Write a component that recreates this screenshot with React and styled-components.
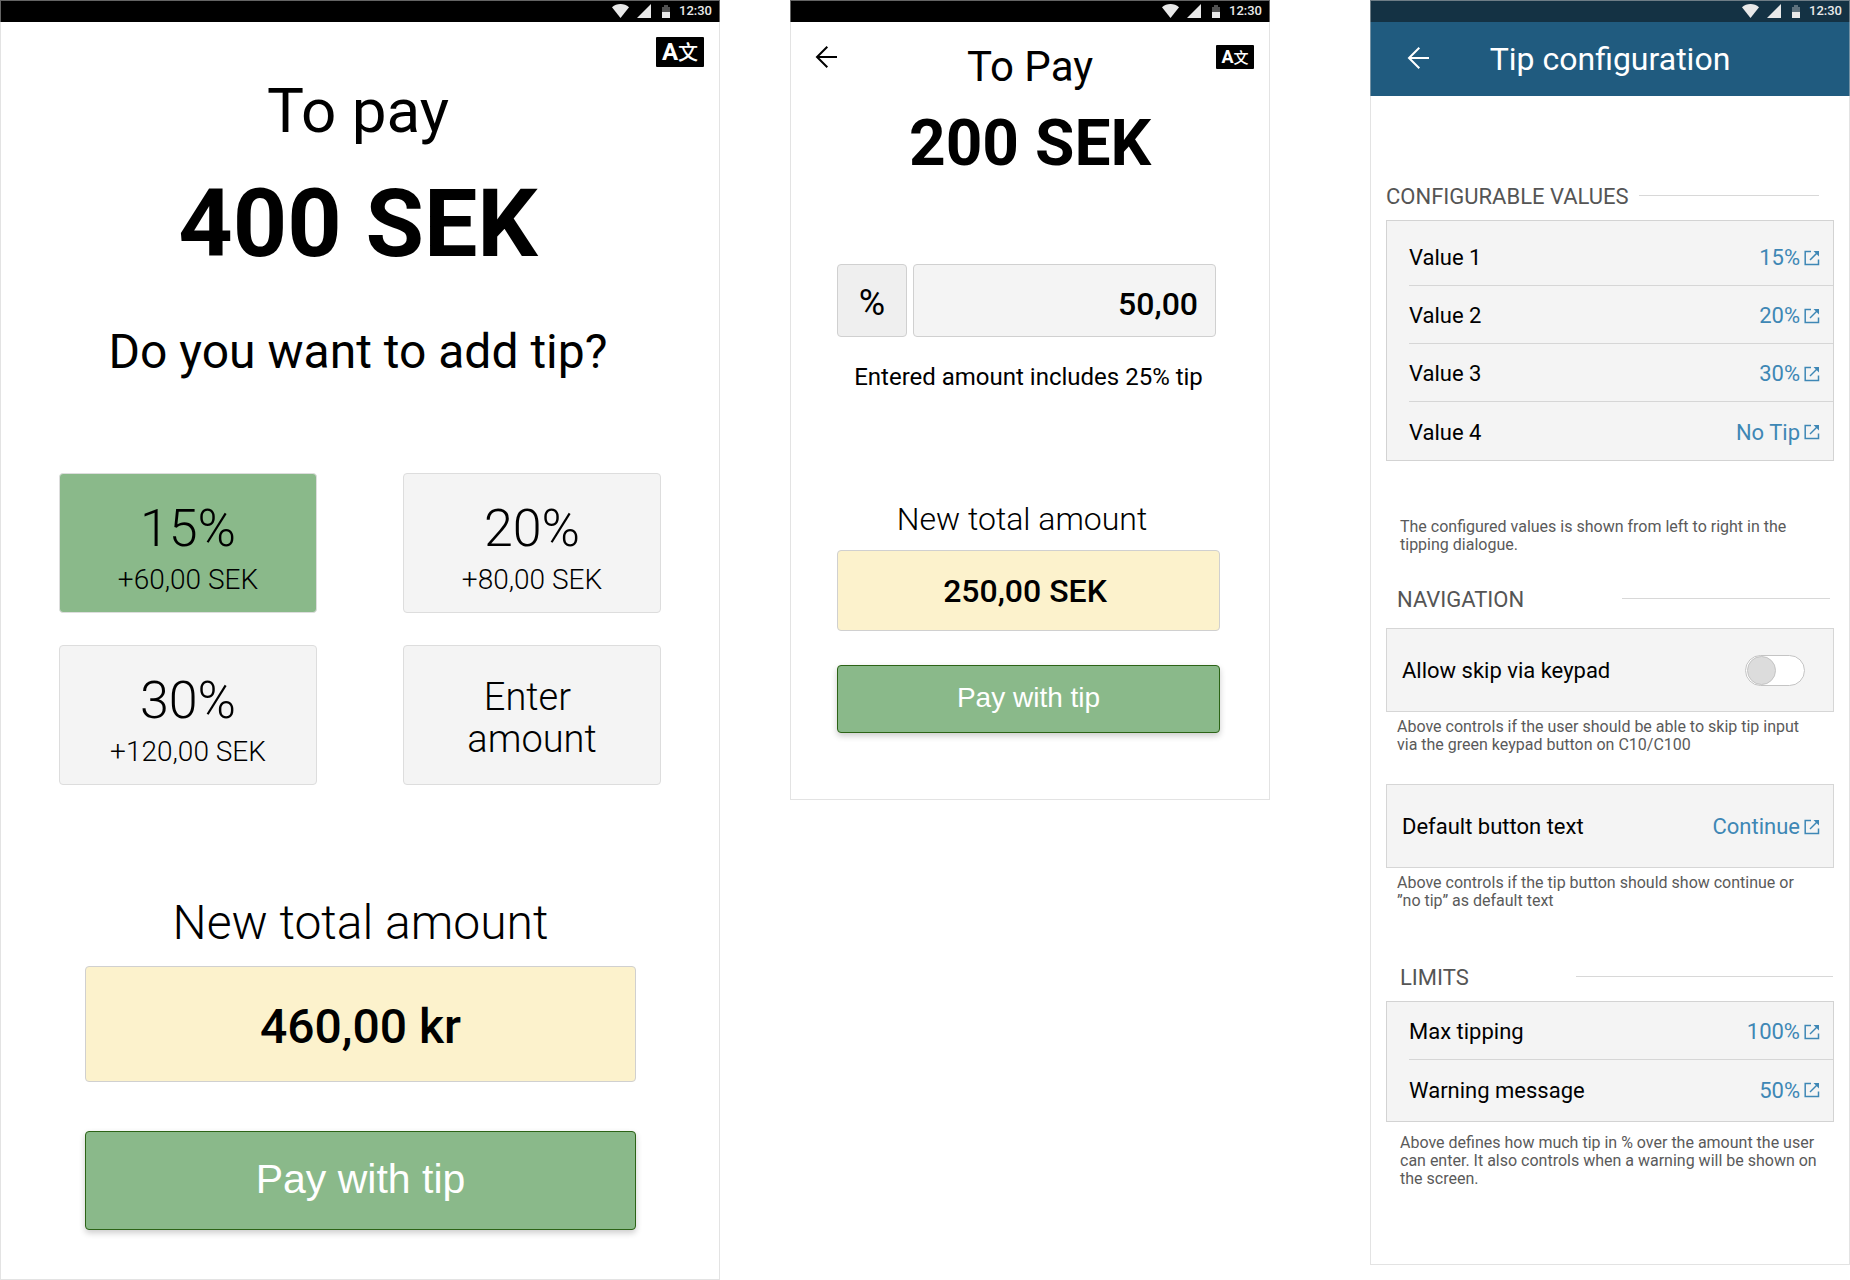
// App.jsx
// Tipping screens: amount choice, free amount, configuration

import styled, { createGlobalStyle } from "styled-components";

const GlobalStyle = createGlobalStyle`
    * { box-sizing: border-box; }

    body {
        margin: 0;
        background: #fff;
        color: #000;
        font-family: Roboto, "Liberation Sans", sans-serif;
    }

    button, input {
        font-family: inherit;
        color: inherit;
        padding: 0;
        margin: 0;
    }

    h1, h2, p, ul { margin: 0; padding: 0; }
    ul { list-style: none; }
`;

const Board = styled.main`
    display: flex;
    align-items: flex-start;
    gap: 70px;
`;

const Screen = styled.section`
    position: relative;
    flex: ${({ $grow }) => $grow} 1 0;
    min-width: 0;
    display: flex;
    flex-direction: column;
    padding-bottom: ${({ $bottom }) => $bottom}px;
    margin-left: ${({ $apart }) => ($apart ? 30 : 0)}px;

    /* thin frame on top of the bars */
    &::after {
        content: "";
        position: absolute;
        inset: 0;
        border: 1px solid rgba(200, 200, 200, 0.5);
        pointer-events: none;
    }
`;

const Status = styled.div`
    display: flex;
    justify-content: flex-end;
    align-items: center;
    height: 22px;
    padding-right: 8px;
    background: ${({ $blue }) => ($blue ? "#143244" : "#000")};
    color: #e9e9e9;
    font-size: 13px;
    line-height: 16px;
    font-weight: 500;

    & svg { margin-right: 8px; }
`;

const Badge = styled.button`
    display: flex;
    justify-content: center;
    align-items: center;
    width: ${({ $small }) => ($small ? 38 : 48)}px;
    height: ${({ $small }) => ($small ? 24 : 30)}px;
    border: 0;
    border-radius: 1px;
    background: #000;
    color: #fff;
    font-size: ${({ $small }) => ($small ? 18 : 24)}px;
    line-height: 24px;
    font-weight: 700;

    & span {
        font-family: "Noto Sans CJK SC", sans-serif;
        font-size: ${({ $small }) => ($small ? 15 : 20)}px;
        font-weight: 500;
    }
`;

const LanguageRow = styled.div`
    display: flex;
    justify-content: flex-end;
    padding: 15px 16px 0;
`;

const Intro = styled.div`
    padding-right: 4px;
`;

const PayTitle = styled.h1`
    margin-top: 8px;
    font-size: 62px;
    line-height: 72px;
    font-weight: 400;
    text-align: center;
`;

const Amount = styled.p`
    margin-top: ${({ $small }) => ($small ? 15 : 21)}px;
    font-size: ${({ $small }) => ($small ? 64 : 95)}px;
    line-height: ${({ $small }) => ($small ? 76 : 112)}px;
    font-weight: 700;
    text-align: center;
`;

const Question = styled.h2`
    margin-top: 44px;
    font-size: 48px;
    line-height: 56px;
    font-weight: 400;
    text-align: center;
`;

const Choices = styled.div`
    display: grid;
    grid-template-columns: 1fr 1fr;
    gap: 32px 86px;
    margin-top: 93px;
    padding: 0 59px;
`;

const Choice = styled.button`
    display: flex;
    flex-direction: column;
    justify-content: center;
    align-items: center;
    gap: 4px;
    height: 140px;
    padding-top: 10px;
    border: 1px solid #ddd;
    border-radius: 4px;
    background: ${({ $selected }) => ($selected ? "#8ab98a" : "#f4f4f4")};
    font-size: 28px;
    line-height: 34px;
    font-weight: 300;

    & strong {
        font-size: 52px;
        line-height: 60px;
        font-weight: 300;
    }
`;

const EnterText = styled.span`
    width: 140px;
    padding-bottom: 4px;
    font-size: 38px;
    line-height: 42px;
    white-space: break-spaces;
`;

const Form = styled.div`
    display: flex;
    flex-direction: column;
    padding: ${({ $small }) => ($small ? "0 50px 0 47px" : "0 84px 0 85px")};
`;

const TotalLabel = styled.h2`
    margin-top: ${({ $small }) => ($small ? 108 : 110)}px;
    padding-right: ${({ $small }) => ($small ? 13 : 0)}px;
    font-size: ${({ $small }) => ($small ? 32 : 48)}px;
    line-height: ${({ $small }) => ($small ? 40 : 56)}px;
    font-weight: 300;
    text-align: center;
`;

const Total = styled.output`
    display: flex;
    justify-content: center;
    align-items: center;
    height: ${({ $small }) => ($small ? 81 : 116)}px;
    margin-top: ${({ $small }) => ($small ? 11 : 15)}px;
    padding: ${({ $small }) => ($small ? "0 7px 0 0" : "5px 0 0")};
    border: 1px solid #d0d0d0;
    border-radius: 4px;
    background: #fcf2cc;
    font-size: ${({ $small }) => ($small ? 32 : 48)}px;
    font-weight: 500;
`;

const PayButton = styled.button`
    height: ${({ $small }) => ($small ? 68 : 99)}px;
    margin-top: ${({ $small }) => ($small ? 34 : 49)}px;
    padding-bottom: 2px;
    border: 1px solid #2c6316;
    border-radius: 4px;
    background: #8ab98a;
    box-shadow: 0 3px 6px rgba(0, 0, 0, 0.2);
    color: #fff;
    font-family: "Liberation Sans", Arial, sans-serif;
    font-size: ${({ $small }) => ($small ? 28 : 41)}px;
`;

const Header = styled.header`
    display: grid;
    grid-template-columns: 1fr auto 1fr;
    align-items: start;
    padding: 21px 16px 0;

    & h1 {
        font-size: 42px;
        line-height: 48px;
        font-weight: 400;
    }
`;

const HeaderSide = styled.div`
    display: flex;
    align-items: center;
    justify-content: ${({ $end }) => ($end ? "flex-end" : "flex-start")};
    height: ${({ $tall }) => ($tall ? 36 : 28)}px;
    padding-left: 8px;
`;

const BackButton = styled.button`
    display: flex;
    border: 0;
    background: none;
`;

const InputRow = styled.div`
    display: flex;
    gap: 6px;
    margin: 82px 4px 0 0;
`;

const UnitButton = styled.button`
    width: 70px;
    height: 73px;
    padding-top: 4px;
    border: 1px solid #d0d0d0;
    border-radius: 4px;
    background: #efefef;
    font-size: 36px;
`;

const AmountInput = styled.input`
    flex: 1;
    min-width: 0;
    height: 73px;
    padding: 6px 17px 0;
    border: 1px solid #d0d0d0;
    border-radius: 4px;
    background: #f4f4f4;
    font-size: 32px;
    font-weight: 500;
    text-align: right;
`;

const Hint = styled.p`
    margin-top: 26px;
    font-size: 24px;
    line-height: 28px;
    text-align: center;
`;

const AppBar = styled.header`
    display: grid;
    grid-template-columns: 1fr auto 1fr;
    align-items: start;
    height: 74px;
    padding: 18px 28px 0;
    background: #205b7f;
    color: #fff;

    & h1 {
        font-size: 32px;
        line-height: 38px;
        font-weight: 400;
    }
`;

const Settings = styled.div`
    display: flex;
    flex-direction: column;
    padding: 0 16px;
`;

const SectionTitle = styled.h2`
    display: flex;
    justify-content: space-between;
    align-items: center;
    margin-top: ${({ $top }) => $top}px;
    margin-bottom: ${({ $gap }) => $gap}px;
    padding: ${({ $inset }) => $inset};
    color: #555;
    font-size: 22px;
    line-height: 26px;
    font-weight: 400;
    white-space: nowrap;

    &::after {
        content: "";
        width: ${({ $rule }) => $rule}px;
        height: 1px;
        margin-bottom: 3px;
        background: #d8d8d8;
    }
`;

const List = styled.ul`
    padding: ${({ $pad }) => $pad};
    border: 1px solid #d3d3d3;
    background: #f4f4f4;
`;

const Row = styled.li`
    display: flex;
    justify-content: space-between;
    align-items: center;
    height: 58px;
    padding: 2px 13px 0 0;
    border-bottom: 1px solid #d6d6d6;
    font-size: 22px;

    &:last-child { border-bottom: 0; }
`;

const Panel = styled.div`
    display: flex;
    justify-content: space-between;
    align-items: center;
    height: 84px;
    margin-top: ${({ $top }) => $top}px;
    padding: 1px ${({ $right }) => $right}px 0 15px;
    border: 1px solid #d6d6d6;
    background: #f4f4f4;
    font-size: 22px;
`;

const ValueLink = styled.a`
    display: flex;
    align-items: center;
    gap: 4px;
    color: #3e87b5;
    text-decoration: none;
`;

const Note = styled.p`
    margin-top: ${({ $top }) => $top}px;
    padding: 0 14px 0 ${({ $left }) => $left}px;
    color: #5a5a5a;
    font-size: 16px;
    line-height: 18px;
`;

const Toggle = styled.input`
    appearance: none;
    display: flex;
    align-items: center;
    width: 60px;
    height: 31px;
    padding: 1px;
    border: 1px solid #c4c4c4;
    border-radius: 16px;
    background: #fff;

    &::before {
        content: "";
        width: 27px;
        height: 27px;
        border: 1px solid #c4c4c4;
        border-radius: 50%;
        background: #dcdcdc;
    }

    &:checked { justify-content: flex-end; }
`;

function StatusBar({ blue }) {
    return (
        <Status $blue={blue}>
            <svg width="60" height="16" viewBox="0 0 60 16" fill="currentColor">
                <path d="M1 4.2C3.400 2 6.300 1 9.500 1s6.100 1 8.500 3.200L9.500 15z" />
                <path d="M40 1v14H26z" />
                <path d="M51 4h2V2h4v2h2v5h-8z" opacity="0.35" />
                <path d="M51 9h8v6h-8z" />
            </svg>
            12:30
        </Status>
    )
}

function Language({ small }) {
    return (
        <Badge type="button" aria-label="Language" $small={small}>A<span>文</span></Badge>
    )
}

function Back() {
    return (
        <BackButton type="button" aria-label="Back">
            <svg width="24" height="24" viewBox="0 0 24 24" fill="none" stroke="currentColor" strokeWidth="2">
                <path d="M23 12H3M13.300 1.700L3 12l10.300 10.300" />
            </svg>
        </BackButton>
    )
}

function EditLink({ children }) {
    return (
        <ValueLink href="#">
            {children}
            <svg width="16" height="16" viewBox="0 0 16 16" fill="none" stroke="currentColor" strokeWidth="1.500">
                <path d="M7 1.500H1.200V14.500H14.500V9.500" />
                <path d="M6 10L13 3" />
                <path d="M9.500 1H15V6.500z" fill="currentColor" stroke="none" />
            </svg>
        </ValueLink>
    )
}

function TipChoice() {
    return (
        <Screen $grow={3} $bottom={50}>
            <StatusBar />
            <LanguageRow><Language /></LanguageRow>
            <Intro>
                <PayTitle>To pay</PayTitle>
                <Amount>400 SEK</Amount>
                <Question>Do you want to add tip?</Question>
            </Intro>
            <Choices>
                <Choice type="button" $selected><strong>15%</strong>+60,00 SEK</Choice>
                <Choice type="button"><strong>20%</strong>+80,00 SEK</Choice>
                <Choice type="button"><strong>30%</strong>+120,00 SEK</Choice>
                <Choice type="button"><EnterText>Enter amount</EnterText></Choice>
            </Choices>
            <Form>
                <TotalLabel>New total amount</TotalLabel>
                <Total>460,00 kr</Total>
                <PayButton type="button">Pay with tip</PayButton>
            </Form>
        </Screen>
    )
}

function TipAmount() {
    return (
        <Screen $grow={2} $bottom={67}>
            <StatusBar />
            <Header>
                <HeaderSide><Back /></HeaderSide>
                <h1>To Pay</h1>
                <HeaderSide $end><Language small /></HeaderSide>
            </Header>
            <Amount $small>200 SEK</Amount>
            <Form $small>
                <InputRow>
                    <UnitButton type="button">%</UnitButton>
                    <AmountInput type="text" aria-label="Amount" defaultValue="50,00" />
                </InputRow>
                <Hint>Entered amount includes 25% tip</Hint>
                <TotalLabel $small>New total amount</TotalLabel>
                <Total $small>250,00 SEK</Total>
                <PayButton type="button" $small>Pay with tip</PayButton>
            </Form>
        </Screen>
    )
}

const values = [
    ["Value 1", "15%"],
    ["Value 2", "20%"],
    ["Value 3", "30%"],
    ["Value 4", "No Tip"],
];

const limits = [
    ["Max tipping", "100%"],
    ["Warning message", "50%"],
];

function TipConfiguration() {
    return (
        <Screen $grow={2} $bottom={77} $apart>
            <StatusBar blue />
            <AppBar>
                <HeaderSide $tall><Back /></HeaderSide>
                <h1>Tip configuration</h1>
            </AppBar>
            <Settings>
                <SectionTitle $top={88} $gap={10} $inset="0 15px 0 0" $rule={180}>CONFIGURABLE VALUES</SectionTitle>
                <List $pad="7px 0 0 22px">
                    {values.map(([name, value]) => (
                        <Row key={name}>{name}<EditLink>{value}</EditLink></Row>
                    ))}
                </List>
                <Note $top={57} $left={14}>The configured values is shown from left to right in the tipping dialogue.</Note>

                <SectionTitle $top={33} $gap={15} $inset="0 4px 0 11px" $rule={208}>NAVIGATION</SectionTitle>
                <Panel $top={0} $right={28}>
                    <label htmlFor="skip">Allow skip via keypad</label>
                    <Toggle type="checkbox" id="skip" />
                </Panel>
                <Note $top={6} $left={11}>Above controls if the user should be able to skip tip input via the green keypad button on C10/C100</Note>
                <Panel $top={30} $right={13}>
                    Default button text
                    <EditLink>Continue</EditLink>
                </Panel>
                <Note $top={6} $left={11}>Above controls if the tip button should show continue or ”no tip” as default text</Note>

                <SectionTitle $top={55} $gap={10} $inset="0 1px 0 14px" $rule={257}>LIMITS</SectionTitle>
                <List $pad="0 0 3px 22px">
                    {limits.map(([name, value]) => (
                        <Row key={name}>{name}<EditLink>{value}</EditLink></Row>
                    ))}
                </List>
                <Note $top={12} $left={14}>Above defines how much tip in % over the amount the user can enter. It also controls when a warning will be shown on the screen.</Note>
            </Settings>
        </Screen>
    )
}

export default function App() {
    return (
        <>
            <GlobalStyle />
            <Board>
                <TipChoice />
                <TipAmount />
                <TipConfiguration />
            </Board>
        </>
    )
}
